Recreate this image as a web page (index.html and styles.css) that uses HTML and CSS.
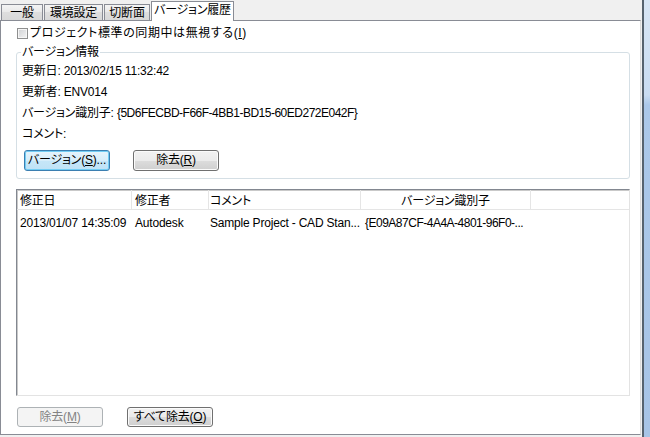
FILE: index.html
```html
<!DOCTYPE html>
<html lang="ja">
<head>
<meta charset="utf-8">
<link rel="stylesheet" href="styles.css">
</head>
<body>
<div class="screen">
  <div class="window">
    <div class="tabbar">
      <div class="tab t1">一般</div>
      <div class="tab t2">環境設定</div>
      <div class="tab t3">切断面</div>
      <div class="tab active">バージョン履歴</div>
    </div>
    <div class="panel">
      <div class="check"><span class="box"></span><span class="check-label">プロジェクト標準の同期中は無視する(<u>I</u>)</span></div>
      <fieldset class="group">
        <legend>バージョン情報</legend>
        <div class="info">更新日: 2013/02/15 11:32:42</div>
        <div class="info">更新者: ENV014</div>
        <div class="info">バージョン識別子: <span class="hex">{5D6FECBD-F66F-4BB1-BD15-60ED272E042F}</span></div>
        <div class="info">コメント:</div>
        <div class="btnrow top">
          <button class="btn focus">バージョン(<u>S</u>)...</button>
          <button class="btn">除去(<u>R</u>)</button>
        </div>
      </fieldset>
      <div class="list">
        <div class="lhead">
          <div class="hc c1">修正日</div>
          <div class="hc c2">修正者</div>
          <div class="hc c3">コメント</div>
          <div class="hc c4">バージョン識別子</div>
          <div class="hc c5"></div>
        </div>
        <div class="lrow">
          <div class="dc c1">2013/01/07 14:35:09</div>
          <div class="dc c2">Autodesk</div>
          <div class="dc c3">Sample Project - CAD Stan...</div>
          <div class="dc c4 hex">{E09A87CF-4A4A-4801-96F0-...</div>
          <div class="dc c5"></div>
        </div>
      </div>
      <div class="btnrow bottom">
        <button class="btn disabled" disabled>除去(<u>M</u>)</button>
        <button class="btn">すべて除去(<u>O</u>)</button>
      </div>
    </div>
  </div>
  <div class="frame"></div>
</div>
</body>
</html>
```
FILE: styles.css
```css
html, body {
  margin: 0;
  padding: 0;
}
body {
  background: #f0f0f0;
  overflow: hidden;
  font-family: "Liberation Sans", "Noto Sans CJK JP", sans-serif;
  font-size: 12px;
  font-feature-settings: "palt";
  letter-spacing: -0.2px;
  color: #000;
}
.screen {
  display: flex;
  width: 650px;
  height: 437px;
}
.window {
  width: 641px;
  display: flex;
  flex-direction: column;
}
.tabbar {
  height: 20px;
  display: flex;
  align-items: flex-end;
  padding-left: 1px;
  gap: 1px;
}
.tab {
  box-sizing: border-box;
  border: 1px solid #898c95;
  border-bottom: none;
  text-align: center;
  white-space: nowrap;
}
.tab.t1, .tab.t2, .tab.t3 {
  height: 16px;
  line-height: 14px;
  padding-top: 1px;
  background: linear-gradient(#f4f4f4, #e8e8e8 50%, #dedede 50%, #d8d8d8);
}
.t1 { width: 42px; }
.t2 { width: 59px; }
.t3 { width: 46px; }
.tab.active {
  width: 83px;
  height: 20px;
  line-height: 17px;
  background: #fff;
  margin-bottom: -1px;
  position: relative;
  z-index: 1;
}
.panel {
  box-sizing: border-box;
  height: 415px;
  background: #fff;
  border: 1px solid #898c95;
  border-right-color: #dcdcdc;
  padding: 0 10px 0 15px;
}
.check {
  margin-top: 5px;
  height: 14px;
  line-height: 14px;
  display: flex;
  align-items: center;
  white-space: nowrap;
}
.check-label {
  letter-spacing: 0.6px;
}
.box {
  box-sizing: border-box;
  width: 11px;
  height: 11px;
  margin-left: 1px;
  margin-right: 2px;
  border: 1px solid #8e8f8f;
  background: linear-gradient(135deg, #cfd1d4, #f4f4f4);
  box-shadow: inset 0 0 0 1px #f6f6f6;
}
.group {
  margin: 5px 0 0 0;
  padding: 2px 5px 7px 5px;
  border: 1px solid #d5dfe5;
  border-radius: 3px;
  min-width: 0;
}
.group legend {
  padding: 0 1px;
  margin-left: -1px;
  line-height: 14px;
}
.info {
  line-height: 21px;
  height: 21px;
  white-space: nowrap;
}
.hex {
  letter-spacing: -0.5px;
}
.btnrow {
  display: flex;
  gap: 23px;
}
.btnrow.top {
  margin-top: 5px;
  margin-left: 2px;
}
.btnrow.bottom {
  margin-top: 11px;
  margin-left: 1px;
  gap: 24px;
}
.btn {
  box-sizing: border-box;
  width: 86px;
  height: 21px;
  padding: 0;
  font: inherit;
  letter-spacing: inherit;
  color: #000;
  border: 1px solid #707070;
  border-radius: 3px;
  background: linear-gradient(#f2f2f2, #ebebeb 50%, #dddddd 50%, #cfcfcf);
  box-shadow: inset 0 0 0 1px #fbfbfb;
  line-height: 17px;
  white-space: nowrap;
}
.btnrow.bottom .btn {
  height: 20px;
  line-height: 16px;
}
.btn.focus {
  border-color: #3c7fb1;
  background: linear-gradient(#e6f4fc, #d6edfa 50%, #c6e6f8 50%, #bfe2f6);
  box-shadow: inset 0 0 0 1px #72cdf4;
}
.btn.disabled {
  color: #838383;
  border-color: #adb2b5;
  background: #f4f4f4;
  box-shadow: none;
}
.list {
  box-sizing: border-box;
  margin-top: 10px;
  height: 207px;
  border: 1px solid;
  border-color: #828790 #e3e3e3 #e3e3e3 #828790;
  box-shadow: inset 1px 1px 0 #c9c9c9;
}
.lhead, .lrow {
  display: grid;
  grid-template-columns: 115px 77px 152px 170px 1fr;
}
.lhead {
  height: 20px;
  box-sizing: border-box;
  border-bottom: 1px solid #e5e5e5;
}
.hc {
  box-sizing: border-box;
  border-right: 1px solid #e5e5e5;
  padding-top: 3px;
  line-height: 16px;
  white-space: nowrap;
  overflow: hidden;
}
.hc.c5 { border-right: none; }
.lrow {
  margin-top: 5px;
  line-height: 16px;
}
.dc {
  white-space: nowrap;
  overflow: hidden;
}
.c1, .c2 { padding-left: 3px; }
.c3 { padding-left: 1px; }
.dc.c4 { padding-left: 4px; }
.hc.c4 { text-align: center; }
.frame {
  box-sizing: border-box;
  width: 8px;
  margin-left: 1px;
  border-left: 2px solid #56636f;
  background: linear-gradient(#d8e6f5, #c9dcf1 95px, #abc8e9 105px, #a7c4e6);
}
```
